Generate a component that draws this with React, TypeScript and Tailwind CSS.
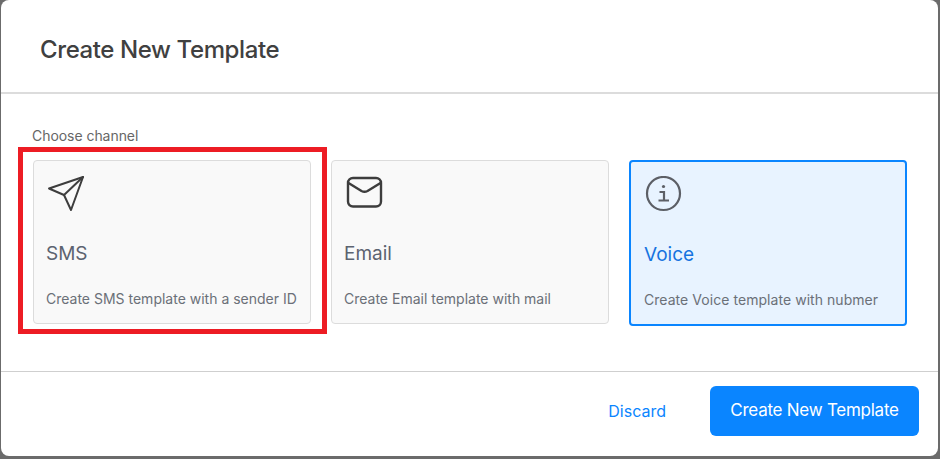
const channels = [
  { name: "SMS", text: "Create SMS template with a sender ID", icon: "send" },
  { name: "Email", text: "Create Email template with mail", icon: "mail" },
  { name: "Voice", text: "Create Voice template with nubmer", icon: "info", active: true },
];

const ChannelIcon = ({ icon }: { icon: string }) => {
  if (icon === "send") {
    return (
      <svg width="40" height="40" viewBox="0 0 40 40" fill="none" stroke="#3d3d3d" strokeWidth="2" strokeLinejoin="round" strokeLinecap="round">
        <path d="M37 2 L3 13.5 L18 20 L25 35 Z" />
        <path d="M37 2 L18 20" />
      </svg>
    );
  }
  if (icon === "mail") {
    return (
      <svg width="40" height="40" viewBox="0 0 40 40" fill="none" stroke="#3d3d3d" strokeWidth="2.4" strokeLinejoin="round" strokeLinecap="round">
        <rect x="4" y="3" width="33" height="28.5" rx="5" />
        <path d="M4.5 8 L17.5 16 Q20.5 17.5 23.5 16 L36.5 8" />
      </svg>
    );
  }
  return (
    <svg width="40" height="40" viewBox="0 0 40 40" fill="none" stroke="#5c5f66" strokeWidth="2.2">
      <circle cx="19.5" cy="17.5" r="16.5" />
      <circle cx="19.5" cy="10.5" r="1.6" fill="#5c5f66" stroke="none" />
      <path d="M15.5 16 H20 V24.5 M14.5 24.5 H25" />
    </svg>
  );
};

export default function App() {
  return (
    <div className="relative h-[459px] w-[940px] overflow-hidden bg-[#6b6b6b] font-['Inter',sans-serif]">
      <div className="ml-px flex h-[456px] w-[937px] flex-col rounded-lg bg-white">
        {/* Header */}
        <div className="flex h-[94px] items-center border-b-2 border-[#dcdcdc] pl-[39px] pt-[8px]">
          <h2 className="text-[24px] font-medium tracking-[-0.4px] text-[#404040]">Create New Template</h2>
        </div>

        {/* Channel cards */}
        <div className="h-[278px] border-b border-[#cfcfcf] pl-[32px] pt-[33px]">
          <p className="mb-[16px] -ml-px text-[14px] leading-[17px] tracking-[-0.05px] text-[#666666]">Choose channel</p>
          <div className="flex gap-5">
            {channels.map((c) => (
              <div
                key={c.name}
                className={
                  c.active
                    ? "h-[166px] w-[278px] rounded border-2 border-[#0a85ff] bg-[#e8f3ff] pl-[13px] pt-[14px]"
                    : "h-[164px] w-[278px] rounded border border-[#dcdcdc] bg-[#f9f9f9] pl-[12px] pt-[14px]"
                }
              >
                <ChannelIcon icon={c.icon} />
                <p className={c.active ? "mt-[27px] text-[19px] leading-[24px] text-[#1673e0]" : "mt-[27px] text-[19px] leading-[24px] text-[#5c6370]"}>
                  {c.name}
                </p>
                <p className={c.active ? "mt-[23px] text-[14px] leading-[20px] tracking-[0.05px] text-[#6b7078]" : "mt-[23px] text-[14px] leading-[20px] text-[#6b7078]"}>{c.text}</p>
              </div>
            ))}
          </div>
        </div>

        {/* Footer */}
        <div className="flex flex-1 items-center justify-end pb-[6px] pr-[19px]">
          <button className="mr-[44px] text-[16px] text-[#0a85ff]">Discard</button>
          <button className="h-[50px] w-[209px] rounded-md bg-[#0a85ff] text-[17px] tracking-[-0.25px] text-white">Create New Template</button>
        </div>
      </div>

      {/* Annotation around the first card */}
      <div className="absolute left-[18px] top-[147px] h-[187px] w-[309px] border-[5px] border-[#ed1c24]" />
    </div>
  );
}
